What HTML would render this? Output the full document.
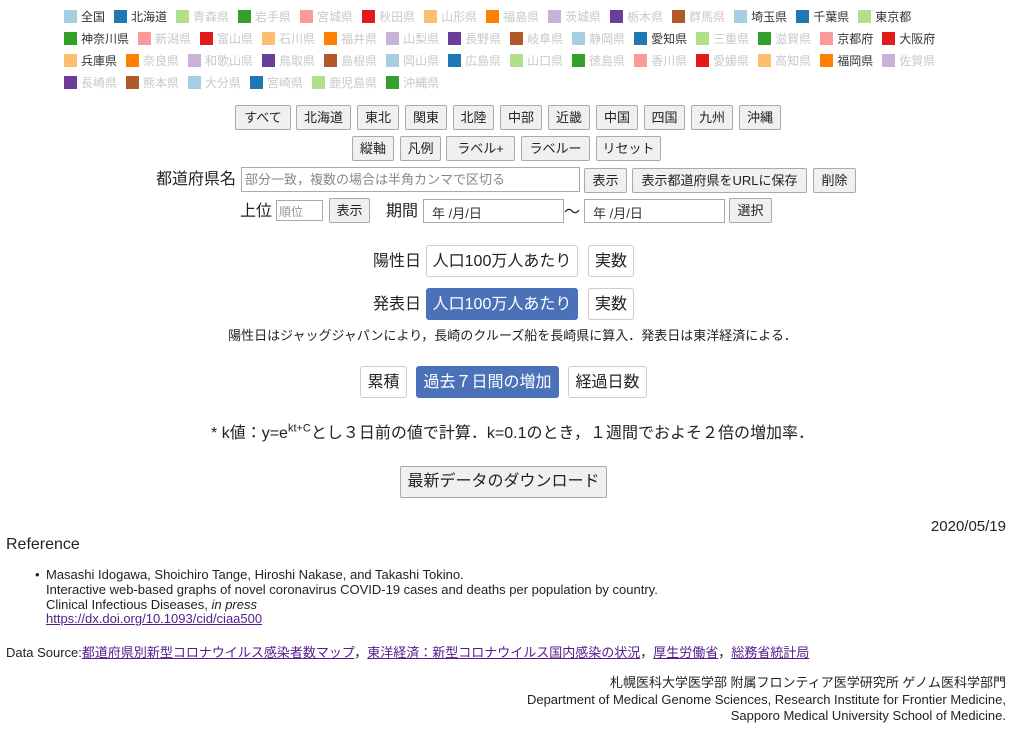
<!DOCTYPE html>
<html><head><meta charset="utf-8"><style>
*{box-sizing:border-box}
body{margin:0;width:1025px;height:735px;position:relative;background:#fff;font-family:"Liberation Sans","Noto Sans CJK JP",sans-serif;color:#222;overflow:hidden}
.a{position:absolute;white-space:nowrap}
.lg{position:absolute;left:64px;font-size:12px;line-height:14px;white-space:nowrap}
.it{display:inline-block;margin-right:9px;color:#c8c8c8}
.it.on{color:#333}
.it i{display:inline-block;width:13px;height:13px;vertical-align:-2px;margin-right:4px}
.b{position:absolute;height:25px;border:1px solid #aaa;border-radius:2px;background:#f0f0f0;font-size:13px;text-align:center;line-height:23px;color:#222;white-space:nowrap}
.w{background:#fff;border-color:#ccc;border-radius:3px;font-size:16px}
.bl{background:#4b72b8;border-color:#4b72b8;color:#fff;border-radius:3px;font-size:16px}
.in{position:absolute;border:1px solid #aaa;background:#fff;font-size:13px;color:#333}
a{color:#551a8b;text-decoration:underline}
</style></head><body>
<div class="lg" style="top:10px">
<span class="it on"><i style="background:#a6cee3"></i>全国</span><span class="it on"><i style="background:#1f78b4"></i>北海道</span><span class="it"><i style="background:#b2df8a"></i>青森県</span><span class="it"><i style="background:#33a02c"></i>岩手県</span><span class="it"><i style="background:#fb9a99"></i>宮城県</span><span class="it"><i style="background:#e31a1c"></i>秋田県</span><span class="it"><i style="background:#fdbf6f"></i>山形県</span><span class="it"><i style="background:#ff7f00"></i>福島県</span><span class="it"><i style="background:#cab2d6"></i>茨城県</span><span class="it"><i style="background:#6a3d9a"></i>栃木県</span><span class="it"><i style="background:#b15928"></i>群馬県</span><span class="it on"><i style="background:#a6cee3"></i>埼玉県</span><span class="it on"><i style="background:#1f78b4"></i>千葉県</span><span class="it on"><i style="background:#b2df8a"></i>東京都</span></div>
<div class="lg" style="top:32px">
<span class="it on"><i style="background:#33a02c"></i>神奈川県</span><span class="it"><i style="background:#fb9a99"></i>新潟県</span><span class="it"><i style="background:#e31a1c"></i>富山県</span><span class="it"><i style="background:#fdbf6f"></i>石川県</span><span class="it"><i style="background:#ff7f00"></i>福井県</span><span class="it"><i style="background:#cab2d6"></i>山梨県</span><span class="it"><i style="background:#6a3d9a"></i>長野県</span><span class="it"><i style="background:#b15928"></i>岐阜県</span><span class="it"><i style="background:#a6cee3"></i>静岡県</span><span class="it on"><i style="background:#1f78b4"></i>愛知県</span><span class="it"><i style="background:#b2df8a"></i>三重県</span><span class="it"><i style="background:#33a02c"></i>滋賀県</span><span class="it on"><i style="background:#fb9a99"></i>京都府</span><span class="it on"><i style="background:#e31a1c"></i>大阪府</span></div>
<div class="lg" style="top:54px">
<span class="it on"><i style="background:#fdbf6f"></i>兵庫県</span><span class="it"><i style="background:#ff7f00"></i>奈良県</span><span class="it"><i style="background:#cab2d6"></i>和歌山県</span><span class="it"><i style="background:#6a3d9a"></i>鳥取県</span><span class="it"><i style="background:#b15928"></i>島根県</span><span class="it"><i style="background:#a6cee3"></i>岡山県</span><span class="it"><i style="background:#1f78b4"></i>広島県</span><span class="it"><i style="background:#b2df8a"></i>山口県</span><span class="it"><i style="background:#33a02c"></i>徳島県</span><span class="it"><i style="background:#fb9a99"></i>香川県</span><span class="it"><i style="background:#e31a1c"></i>愛媛県</span><span class="it"><i style="background:#fdbf6f"></i>高知県</span><span class="it on"><i style="background:#ff7f00"></i>福岡県</span><span class="it"><i style="background:#cab2d6"></i>佐賀県</span></div>
<div class="lg" style="top:76px">
<span class="it"><i style="background:#6a3d9a"></i>長崎県</span><span class="it"><i style="background:#b15928"></i>熊本県</span><span class="it"><i style="background:#a6cee3"></i>大分県</span><span class="it"><i style="background:#1f78b4"></i>宮崎県</span><span class="it"><i style="background:#b2df8a"></i>鹿児島県</span><span class="it"><i style="background:#33a02c"></i>沖縄県</span></div>

<div class="b" style="left:235px;top:105px;width:56px">すべて</div>
<div class="b" style="left:296px;top:105px;width:55px">北海道</div>
<div class="b" style="left:357px;top:105px;width:42px">東北</div>
<div class="b" style="left:405px;top:105px;width:42px">関東</div>
<div class="b" style="left:453px;top:105px;width:41px">北陸</div>
<div class="b" style="left:500px;top:105px;width:42px">中部</div>
<div class="b" style="left:548px;top:105px;width:42px">近畿</div>
<div class="b" style="left:596px;top:105px;width:42px">中国</div>
<div class="b" style="left:644px;top:105px;width:41px">四国</div>
<div class="b" style="left:691px;top:105px;width:42px">九州</div>
<div class="b" style="left:739px;top:105px;width:42px">沖縄</div>
<div class="b" style="left:352px;top:136px;width:42px">縦軸</div>
<div class="b" style="left:400px;top:136px;width:41px">凡例</div>
<div class="b" style="left:446px;top:136px;width:69px">ラベル+</div>
<div class="b" style="left:521px;top:136px;width:69px">ラベルー</div>
<div class="b" style="left:596px;top:136px;width:65px">リセット</div>

<div class="a" style="left:156px;top:165px;font-size:16px">都道府県名</div>
<div class="in" style="left:241px;top:167px;width:339px;height:25px;padding:1px 3px;color:#888">部分一致，複数の場合は半角カンマで区切る</div>
<div class="b" style="left:584px;top:168px;width:43px">表示</div>
<div class="b" style="left:632px;top:168px;width:175px">表示都道府県をURLに保存</div>
<div class="b" style="left:813px;top:168px;width:43px">削除</div>

<div class="a" style="left:240px;top:197px;font-size:16px">上位</div>
<div class="in" style="left:276px;top:200px;width:47px;height:21px;font-size:12px;color:#999;padding:2px">順位</div>
<div class="b" style="left:329px;top:198px;width:41px">表示</div>
<div class="a" style="left:386px;top:197px;font-size:16px">期間</div>
<div class="in" style="left:423px;top:199px;width:141px;height:24px;padding:3px 8px">年 /月/日</div>
<div class="a" style="left:564px;top:198px;font-size:16px">〜</div>
<div class="in" style="left:584px;top:199px;width:141px;height:24px;padding:3px 8px">年 /月/日</div>
<div class="b" style="left:729px;top:198px;width:43px">選択</div>

<div class="a" style="left:373px;top:247px;font-size:16px">陽性日</div>
<div class="b w" style="left:426px;top:245px;width:152px;height:32px;line-height:31px">人口100万人あたり</div>
<div class="b w" style="left:588px;top:245px;width:46px;height:32px;line-height:31px">実数</div>
<div class="a" style="left:373px;top:290px;font-size:16px">発表日</div>
<div class="b bl" style="left:426px;top:288px;width:152px;height:32px;line-height:31px">人口100万人あたり</div>
<div class="b w" style="left:588px;top:288px;width:46px;height:32px;line-height:31px">実数</div>
<div class="a" style="left:0;width:1025px;text-align:center;top:325px;font-size:13px">陽性日はジャッグジャパンにより，長崎のクルーズ船を長崎県に算入．発表日は東洋経済による．</div>

<div class="b w" style="left:360px;top:366px;width:47px;height:32px;line-height:31px">累積</div>
<div class="b bl" style="left:416px;top:366px;width:143px;height:32px;line-height:31px">過去７日間の増加</div>
<div class="b w" style="left:568px;top:366px;width:79px;height:32px;line-height:31px">経過日数</div>

<div class="a" style="left:0;width:1025px;text-align:center;top:419px;font-size:16px">* k値：y=e<sup style="font-size:11px">kt+C</sup>とし３日前の値で計算．k=0.1のとき，１週間でおよそ２倍の増加率．</div>

<div class="b" style="left:400px;top:466px;width:207px;height:32px;line-height:30px;font-size:16px">最新データのダウンロード</div>

<div class="a" style="right:19px;top:518px;font-size:15px">2020/05/19</div>
<div class="a" style="left:6px;top:536px;font-size:16px">Reference</div>
<div class="a" style="left:46px;top:568px;font-size:13px;line-height:14.8px">
<div style="position:absolute;left:-11px;top:0">•</div>
<div>Masashi Idogawa, Shoichiro Tange, Hiroshi Nakase, and Takashi Tokino.<br>Interactive web-based graphs of novel coronavirus COVID-19 cases and deaths per population by country.<br>Clinical Infectious Diseases, <i>in press</i><br><a>https://dx.doi.org/10.1093/cid/ciaa500</a></div></div>
<div class="a" style="left:6px;top:642px;font-size:13px">Data Source:<a>都道府県別新型コロナウイルス感染者数マップ</a>，<a>東洋経済：新型コロナウイルス国内感染の状況</a>，<a>厚生労働省</a>，<a>総務省統計局</a></div>
<div class="a" style="right:19px;top:675px;font-size:13px;text-align:right;line-height:16.5px">札幌医科大学医学部 附属フロンティア医学研究所 ゲノム医科学部門<br>Department of Medical Genome Sciences, Research Institute for Frontier Medicine,<br>Sapporo Medical University School of Medicine.</div>
</body></html>
